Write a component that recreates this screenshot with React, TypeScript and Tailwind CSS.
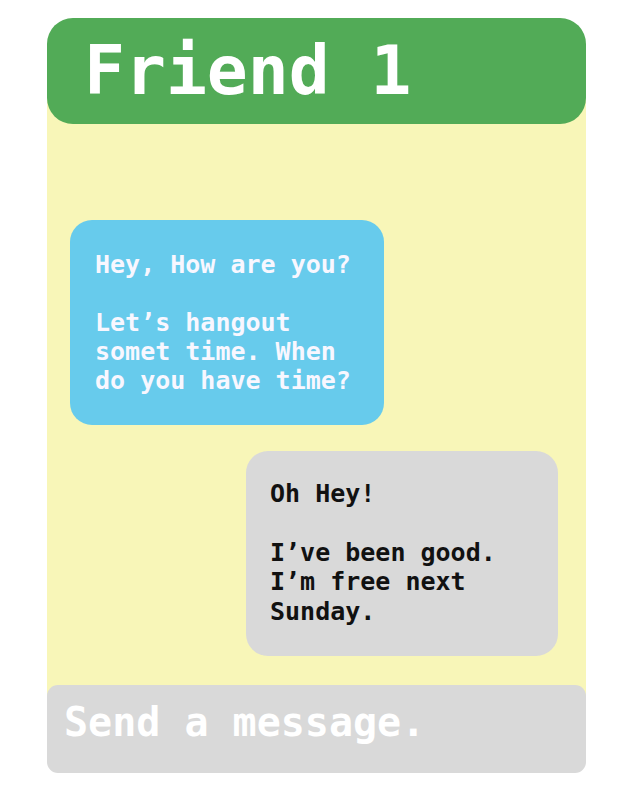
import React from "react";

const Chat = () => {
  return (
    <div className="min-h-screen bg-white pt-[18px] font-['DejaVu_Sans_Mono',monospace]">
      <div className="ml-[47px] w-[539px] flex flex-col bg-[linear-gradient(to_bottom,transparent_53px,#f8f6b8_53px,#f8f6b8_calc(100%-44px),transparent_calc(100%-44px))]">
        {/* header */}
        <div className="h-[106px] rounded-[26px] bg-[#52ab57] flex items-center pl-[37px]">
          <h1 className="text-white text-[68px] font-bold leading-none">Friend 1</h1>
        </div>

        {/* messages */}
        <div className="flex flex-col pt-[96px] px-[23px]">
          <div className="w-[314px] rounded-[22px] bg-[#67cbec] pl-[25px] pr-3 pt-[30px] pb-[30px] text-[#f8f7ff] text-[25px] leading-[29px] font-bold">
            <p>Hey, How are you?</p>
            <p className="mt-[29px]">Let’s hangout somet time. When do you have time?</p>
          </div>
          <div className="self-end mr-[5px] mt-[26px] w-[312px] rounded-[22px] bg-[#d9d9d9] pl-[24px] pr-3 pt-[28px] pb-[30px] text-[#111] text-[25px] leading-[29.5px] font-bold">
            <p>Oh Hey!</p>
            <p className="mt-[29px]">I’ve been good. I’m free next Sunday.</p>
          </div>
        </div>

        {/* input */}
        <div className="mt-[29px] h-[88px] rounded-[11px] bg-[#d9d9d9] flex items-center pl-[17px] pb-[14px]">
          <span className="text-white text-[40px] font-bold leading-none">Send a message.</span>
        </div>
      </div>
    </div>
  );
};

export default function App() {
  return <Chat />;
}
